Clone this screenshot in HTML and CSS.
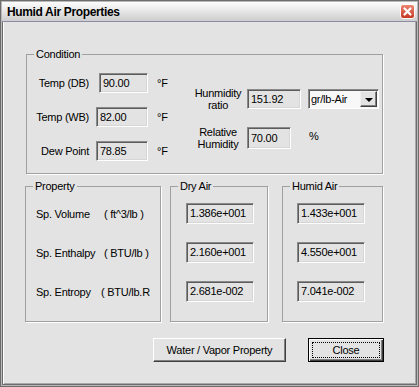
FILE: index.html
```html
<!DOCTYPE html>
<html lang="en">
<head>
    <meta charset="UTF-8">
    <title>Humid Air Properties</title>
    <link rel="stylesheet" href="styles.css">
</head>
<body>
<div class="window">
    <div class="titlebar">
        <span class="title">Humid Air Properties</span>
        <svg class="close-x" width="15" height="15" viewBox="0 0 15 15">
            <defs>
                <linearGradient id="red" x1="0" y1="0" x2="0" y2="1">
                    <stop offset="0" stop-color="#ee8a76"/>
                    <stop offset="1" stop-color="#c3361f"/>
                </linearGradient>
            </defs>
            <rect x="0.5" y="0.5" width="14" height="14" rx="2.5" fill="url(#red)" stroke="#fff"/>
            <path d="M4.5 4.5 L10.5 10.5 M10.5 4.5 L4.5 10.5" stroke="#fff" stroke-width="2.2" stroke-linecap="round"/>
        </svg>
    </div>
    <div class="client">
        <fieldset class="group cond">
            <legend>Condition</legend>
            <div class="cond-body">
                <div class="temps">
                    <span class="lbl">Temp (DB)</span><div class="edit first">90.00</div><span class="unit">°F</span>
                    <span class="lbl">Temp (WB)</span><div class="edit">82.00</div><span class="unit">°F</span>
                    <span class="lbl">Dew Point</span><div class="edit">78.85</div><span class="unit">°F</span>
                </div>
                <div class="humid">
                    <span class="lbl2">Hunmidity<br>ratio</span>
                    <div class="edit ratio">151.92</div>
                    <div class="combo">
                        <span class="val">gr/lb-Air</span>
                        <span class="arrow"><i></i></span>
                    </div>
                    <span class="lbl2">Relative<br>Humidity</span>
                    <div class="edit rh">70.00</div>
                    <span class="pct">%</span>
                </div>
            </div>
        </fieldset>
        <div class="lower">
            <fieldset class="group prop">
                <legend>Property</legend>
                <div class="prop-body">
                    <span>Sp. Volume</span><span>( ft^3/lb )</span>
                    <span>Sp. Enthalpy</span><span>( BTU/lb )</span>
                    <span>Sp. Entropy</span><span class="cut">( BTU/lb.R</span>
                </div>
            </fieldset>
            <fieldset class="group dry">
                <legend>Dry Air</legend>
                <div class="vals">
                    <div class="edit">1.386e+001</div>
                    <div class="edit">2.160e+001</div>
                    <div class="edit">2.681e-002</div>
                </div>
            </fieldset>
            <fieldset class="group wet">
                <legend>Humid Air</legend>
                <div class="vals">
                    <div class="edit">1.433e+001</div>
                    <div class="edit">4.550e+001</div>
                    <div class="edit">7.041e-002</div>
                </div>
            </fieldset>
        </div>
        <div class="buttons">
            <div class="btn water">Water / Vapor Property</div>
            <div class="btn default"><span>Close</span></div>
        </div>
    </div>
</div>
</body>
</html>
```

FILE: styles.css
```css
body {
    margin: 0;
    background: #fff;
    font-family: "Liberation Sans", Arial, sans-serif;
    font-size: 11px;
    letter-spacing: -0.25px;
    color: #000;
}
.window {
    width: 419px; height: 387px; box-sizing: border-box;
    border: 1px solid #6c6c6c; padding: 1px; background: #b9b9b9;
    display: flex; flex-direction: column;
}
.titlebar {
    height: 19px; flex: none;
    border-bottom: 1px solid #8c8ca4;
    background: linear-gradient(#fdfdfd, #e8e8e8 45%, #cdcdcd);
    display: flex; align-items: center; justify-content: space-between;
    padding: 0 2px 0 5px;
}
.title {
    font-weight: bold; font-size: 12px; letter-spacing: -0.35px;
}
.close-x {
    display: block;
}
.client {
    flex: 1;
    background: #e3e3e3;
    border: 1px solid #6c6c6c; border-top: 0;
    box-shadow: inset 1px 0 #fff, inset -1px -1px #a8a8a8;
    padding: 26px 0 0 23px;
}

/* group boxes */
.group {
    margin: 0; padding: 0; min-width: 0; box-sizing: border-box;
    border: 1px solid #a0a0a0;
    box-shadow: 1px 1px 0 #fff;
}
.group legend {
    margin-left: 7px; padding: 0 2px; line-height: 13px;
}
.cond {
    width: 357px; height: 126px;
}
.cond-body {
    display: flex;
}
.temps {
    display: grid;
    grid-template-columns: 62px 59px 20px;
    grid-template-rows: 20px 20px 20px;
    row-gap: 14px;
    padding-top: 12px;
    align-items: center;
}
.temps .lbl {
    text-align: right;
}
.temps .edit {
    margin-left: 7px; width: 52px;
}
.temps .edit.first {
    margin-left: 10px; width: 49px;
}
.unit {
    padding-left: 9px;
}
.humid {
    margin-left: 25px; padding-top: 26px;
    display: grid;
    grid-template-columns: 50px 58px auto;
    grid-template-rows: 24px 24px;
    row-gap: 15px;
    align-items: center;
}
.lbl2 {
    text-align: center; line-height: 12px;
}
.humid .edit {
    margin-left: 4px;
}
.edit.ratio { width: 54px; }
.edit.rh { width: 44px; height: 22px; line-height: 20px; }
.pct {
    padding-left: 8px; padding-bottom: 4px;
}

/* edit fields */
.edit {
    height: 20px; box-sizing: border-box;
    border: 1px solid; border-color: #8a8a8a #fff #fff #8a8a8a;
    box-shadow: inset 1px 1px #5c5c5c, inset -1px -1px #d6d6d6;
    padding-left: 3px; line-height: 18px;
    white-space: nowrap;
}
.combo {
    width: 71px; height: 20px; box-sizing: border-box; margin-left: 7px;
    border: 1px solid; border-color: #8a8a8a #fff #fff #8a8a8a;
    box-shadow: inset 1px 1px #5c5c5c;
    background: #f8f8f8;
    display: flex; align-items: center;
    padding: 1px 1px 1px 0;
}
.combo .val {
    flex: 1; padding-left: 2px;
}
.combo .arrow {
    width: 17px; height: 16px; box-sizing: border-box;
    background: #e3e3e3;
    border: 1px solid; border-color: #f0f0f0 #404040 #404040 #f0f0f0;
    box-shadow: inset -1px -1px #808080;
    display: flex; align-items: center; justify-content: center;
}
.combo .arrow i {
    width: 0; height: 0;
    border-left: 4px solid transparent; border-right: 4px solid transparent;
    border-top: 4px solid #000;
    margin-top: 1px;
}

/* lower groups */
.lower {
    display: flex; margin-top: 6px; margin-left: -1px;
}
.prop { width: 136px; height: 142px; }
.dry { width: 98px; height: 142px; margin-left: 9px; }
.wet { width: 101px; height: 142px; margin-left: 14px; }
.prop-body {
    display: grid;
    grid-template-columns: 68px auto;
    grid-template-rows: 21px 21px 21px;
    row-gap: 18px;
    padding: 10px 0 0 10px;
    align-items: center;
    white-space: nowrap;
}
.prop-body .cut {
    margin-left: -3px;
}
.vals {
    display: flex; flex-direction: column; gap: 18px;
    padding-top: 10px; padding-left: 15px;
}
.wet .vals {
    padding-left: 14px;
}
.vals .edit {
    width: 68px; height: 21px; line-height: 19px;
}

/* buttons */
.buttons {
    display: flex; margin-top: 16px; margin-left: 127px; gap: 22px;
}
.btn {
    height: 24px; box-sizing: border-box;
    display: flex; align-items: center; justify-content: center;
    background: #e3e3e3;
    border: 1px solid; border-color: #fff #404040 #404040 #fff;
    box-shadow: inset -1px -1px #808080;
}
.btn.water { width: 133px; }
.btn.default {
    width: 76px;
    border: 1px solid #000;
    box-shadow: inset 1px 1px #fff, inset -1px -1px #404040, inset -2px -2px #808080;
    padding: 3px;
}
.btn.default span {
    flex: 1; align-self: stretch;
    display: flex; align-items: center; justify-content: center;
    border: 1px dotted #000;
}
```
